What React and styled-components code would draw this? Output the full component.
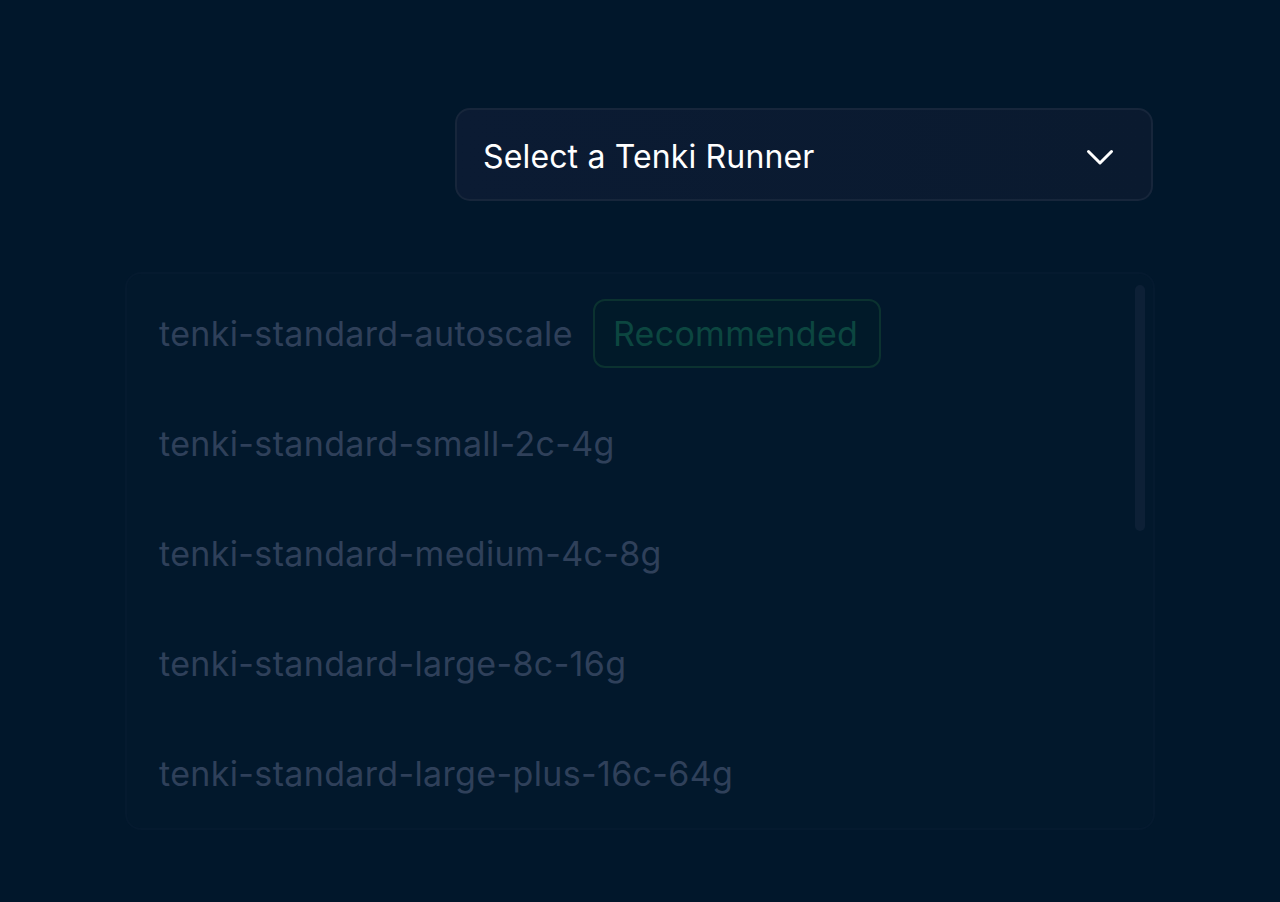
import React from "react";
import styled, { createGlobalStyle } from "styled-components";

const Global = createGlobalStyle`
  html, body { margin: 0; padding: 0; background: #01172b; }
  body { font-family: Inter, "Noto Sans", sans-serif; -webkit-font-smoothing: antialiased; }
`;

const Page = styled.div`
  width: 1280px;
  height: 902px;
  box-sizing: border-box;
  padding: 108px 125px 0 125px;
  display: flex;
  flex-direction: column;
  align-items: flex-end;
  gap: 71px;
`;

const Trigger = styled.button`
  width: 698px;
  height: 93px;
  margin-right: 2px;
  box-sizing: border-box;
  display: flex;
  align-items: center;
  justify-content: space-between;
  padding: 3px 37px 0 26px;
  background: linear-gradient(90deg, #0b1b33 0%, #0a1a2f 100%);
  border: 2px solid #17263b;
  border-radius: 15px;
  color: #ffffff;
  font-family: Inter, sans-serif;
  font-size: 32px;
  font-weight: 400;
  letter-spacing: 0.15px;
  cursor: pointer;
`;

const Chevron = styled.svg`
  width: 28px;
  height: 19px;
  flex: none;
  margin-top: 2px;
`;

const Panel = styled.div`
  width: 1030px;
  height: 558px;
  box-sizing: border-box;
  position: relative;
  background: #02182c;
  border: 2px solid #051a2f;
  border-radius: 16px;
  padding: 4px 0 0 32px;
  overflow: hidden;
  align-self: flex-start;
`;

const Row = styled.div`
  height: 110px;
  display: flex;
  align-items: center;
  gap: 20px;
  font-size: 34px;
  color: #2f405a;
  letter-spacing: 0.35px;
`;

const Badge = styled.span`
  display: inline-flex;
  align-items: center;
  height: 69px;
  box-sizing: border-box;
  padding: 0 21px 0 18px;
  border: 2px solid #0b3230;
  border-radius: 12px;
  background: #011a29;
  color: #0c4640;
  font-size: 34px;
  letter-spacing: 0.3px;
`;

const ScrollThumb = styled.div`
  position: absolute;
  top: 11px;
  right: 8px;
  width: 10px;
  height: 246px;
  border-radius: 5px;
  background: #0d2036;
`;

const runners = [
  { name: "tenki-standard-autoscale", recommended: true },
  { name: "tenki-standard-small-2c-4g" },
  { name: "tenki-standard-medium-4c-8g" },
  { name: "tenki-standard-large-8c-16g" },
  { name: "tenki-standard-large-plus-16c-64g" },
];

export default function App() {
  return (
    <>
      <Global />
      <Page>
        <Trigger>
          <span>Select a Tenki Runner</span>
          <Chevron viewBox="0 0 28 19" fill="none" stroke="#ffffff" strokeWidth="3" strokeLinecap="round" strokeLinejoin="round">
            <path d="M2.5 3.5l11.5 11.5 11.5-11.5" />
          </Chevron>
        </Trigger>
        <Panel>
          {runners.map((r) => (
            <Row key={r.name}>
              <span>{r.name}</span>
              {r.recommended && <Badge>Recommended</Badge>}
            </Row>
          ))}
          <ScrollThumb />
        </Panel>
      </Page>
    </>
  );
}
